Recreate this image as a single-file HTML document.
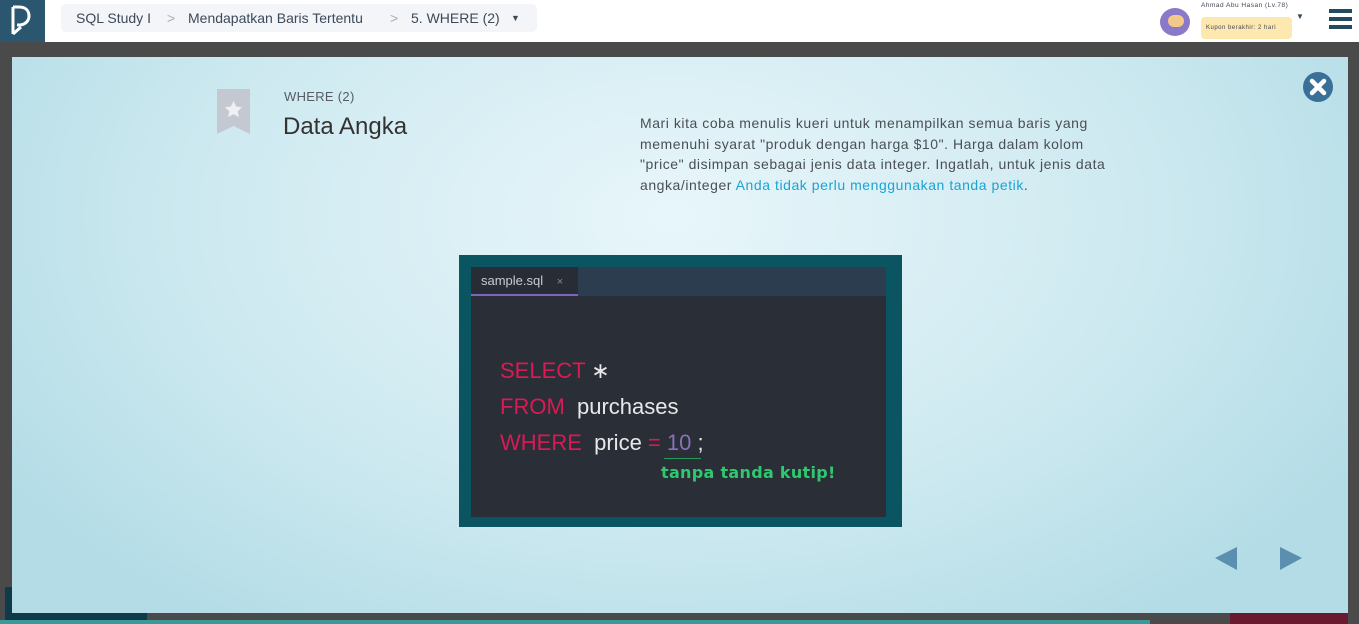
<!DOCTYPE html>
<html><head><meta charset="utf-8">
<style>
*{margin:0;padding:0;box-sizing:border-box}
body{width:1359px;height:624px;overflow:hidden;background:#4a4a4a;font-family:"Liberation Sans",sans-serif;position:relative}
.top{position:absolute;left:0;top:0;width:1359px;height:42px;background:#fff}
.logo{position:absolute;left:0;top:0;width:45px;height:42px;background:#2a5670}
.bc{position:absolute;left:61px;top:4px;width:476px;height:28px;background:#f3f5f8;border-radius:5px;color:#3c4a5a;font-size:14px;line-height:28px;white-space:nowrap}
.bc span{position:absolute;top:0}
.modal{position:absolute;left:12px;top:57px;width:1336px;height:556px;background:radial-gradient(ellipse 800px 500px at 660px 160px,#e8f6fa 0%,#cde9f0 60%,#b3dce6 100%)}
.desc{position:absolute;left:628px;top:56px;font-size:14px;line-height:20.7px;color:#4a4f55;letter-spacing:0.55px;white-space:nowrap}
.desc a{color:#1aa3d4}
.code{position:absolute;left:447px;top:198px;width:443px;height:272px;background:#0b5563}
.inner{position:absolute;left:12px;top:12px;width:415px;height:250px;background:#2a2e36}
.tabbar{position:absolute;left:0;top:0;width:415px;height:29px;background:#2c3d50}
.tab{position:absolute;left:0;top:0;width:107px;height:29px;background:#282c34;border-bottom:2px solid #7a68c0;color:#c8ccd2;font-size:13px;line-height:28px;padding-left:10px}
.ln{position:absolute;left:29px;font-size:22px;color:#e8e8ea;white-space:nowrap}
.k{color:#d81b55}
</style></head><body>
<div class="top">
 <div class="logo"><svg width="45" height="42"><path d="M13 7v27M13 7h6c7 0 10 4 10 9s-4 9-10 9h-2M13 34l8-7" stroke="#fff" stroke-width="3" fill="none"/></svg></div>
 <div class="bc"><span style="left:15px">SQL Study I</span><span style="left:106px;color:#aab">&gt;</span><span style="left:127px">Mendapatkan Baris Tertentu</span><span style="left:329px;color:#aab">&gt;</span><span style="left:350px">5. WHERE (2)</span><span style="left:450px;font-size:9px">▼</span></div>
 <div style="position:absolute;left:1160px;top:8px;width:30px;height:28px;border-radius:50%;background:#8a78c8"></div>
 <div style="position:absolute;left:1168px;top:15px;width:16px;height:12px;border-radius:6px;background:#f3c98a"></div>
 <div style="position:absolute;left:1201px;top:2px;font-size:6.5px;color:#445;letter-spacing:.5px">Ahmad Abu Hasan (Lv.78)</div>
 <div style="position:absolute;left:1201px;top:17px;width:91px;height:22px;background:#fde8b0;border-radius:4px;font-size:6px;line-height:22px;padding-left:5px;color:#445;letter-spacing:.5px">Kupon berakhir: 2 hari</div>
 <div style="position:absolute;left:1296px;top:12px;font-size:8px;color:#2a4a60">▼</div>
 <div style="position:absolute;left:1329px;top:9px;width:23px;height:4px;background:#234a62;box-shadow:0 8px 0 #234a62,0 16px 0 #234a62"></div>
</div>
<div style="position:absolute;left:5px;top:587px;width:142px;height:37px;background:#0e3a4a"></div>
<div style="position:absolute;left:0;top:620px;width:1150px;height:4px;background:#3a9a9a"></div>
<div style="position:absolute;left:1230px;top:595px;width:118px;height:29px;background:#6a1a30"></div>
<div class="modal">
 <svg style="position:absolute;left:205px;top:32px" width="33" height="45"><path d="M0 0h33v45l-16.5-8L0 45z" fill="#c4c8d0"/><path d="M16.5 12l2.6 5.5 6 .7-4.4 4 1.2 5.9-5.4-3-5.4 3 1.2-5.9-4.4-4 6-.7z" fill="#eef0f3"/></svg>
 <div style="position:absolute;left:272px;top:32px;font-size:13px;color:#555c64;letter-spacing:.3px">WHERE (2)</div>
 <div style="position:absolute;left:271px;top:56px;font-size:24px;color:#333">Data Angka</div>
 <div class="desc">Mari kita coba menulis kueri untuk menampilkan semua baris yang<br>memenuhi syarat "produk dengan harga $10". Harga dalam kolom<br>"price" disimpan sebagai jenis data integer. Ingatlah, untuk jenis data<br>angka/integer <a>Anda tidak perlu menggunakan tanda petik</a>.</div>
 <svg style="position:absolute;left:1290px;top:14px" width="32" height="32"><circle cx="16" cy="16" r="15" fill="#3a6f98"/><path d="M10 10l12 12M22 10l-12 12" stroke="#fff" stroke-width="4.5" stroke-linecap="round"/></svg>
 <div class="code"><div class="inner">
  <div class="tabbar"><div class="tab">sample.sql <span style="margin-left:10px;color:#888;font-size:11px">×</span></div></div>
  <div class="ln" style="top:91px"><span class="k">SELECT</span> ∗</div>
  <div class="ln" style="top:127px"><span class="k">FROM</span>&nbsp; purchases</div>
  <div class="ln" style="top:163px"><span class="k">WHERE</span>&nbsp; price <span class="k">=</span> <span style="color:#8a70b8">10</span> ;</div>
  <div style="position:absolute;left:193px;top:191px;width:37px;height:1px;background:#2a9a5a"></div>
  <div style="position:absolute;left:190px;top:196px;font-size:16px;font-weight:bold;color:#2ec870;font-family:'DejaVu Sans',sans-serif;letter-spacing:.3px">tanpa tanda kutip!</div>
 </div></div>
 <svg style="position:absolute;left:1203px;top:489px" width="90" height="26"><path d="M0 12L22 1v23z" fill="#5a8fb0"/><path d="M65 1l22 11-22 12z" fill="#5a8fb0"/></svg>
</div>
</body></html>
